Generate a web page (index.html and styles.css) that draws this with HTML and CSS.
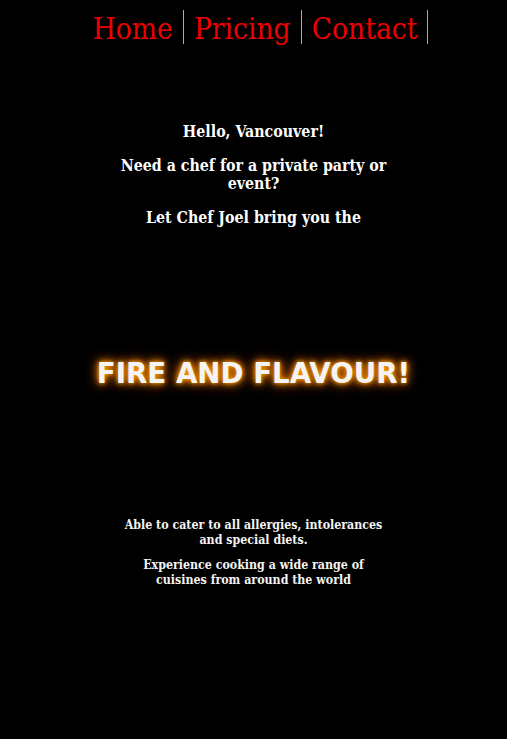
FILE: index.html
```html
<!DOCTYPE html>
<html>
<head>
<meta charset="utf-8">
<link rel="stylesheet" href="styles.css">
</head>
<body>
<nav class="nav">
  <a class="nav-link" href="#">Home</a>
  <a class="nav-link" href="#">Pricing</a>
  <a class="nav-link" href="#">Contact</a>
</nav>
<main class="content">
  <section class="intro">
    <p class="lead">Hello, Vancouver!</p>
    <p class="lead">Need a chef for a private party or event?</p>
    <p class="lead">Let Chef Joel bring you the</p>
  </section>
  <h1 class="fire">FIRE AND FLAVOUR!</h1>
  <section class="details">
    <p class="detail">Able to cater to all allergies, intolerances and special diets.</p>
    <p class="detail">Experience cooking a wide range of cuisines from around the world</p>
  </section>
</main>
</body>
</html>
```
FILE: styles.css
```css
html, body {
  margin: 0;
  background: #000;
}
body {
  font-family: "DejaVu Serif Condensed", "DejaVu Serif", serif;
}
.nav {
  display: flex;
  justify-content: center;
  padding: 10px 0 0 4px;
}
.nav-link {
  color: #ee0000;
  text-decoration: none;
  font-family: "DejaVu Serif Condensed", "DejaVu Serif", serif;
  font-size: 29.6px;
  line-height: 34px;
  padding: 2px 10px 0;
  height: 32px;
  border-right: 1px solid #aaa;
}
.content {
  width: 284px;
  margin: 0 auto;
  text-align: center;
  color: #fff;
}
.intro {
  padding-top: 79px;
}
.lead {
  font-weight: bold;
  font-size: 15.8px;
  line-height: 18px;
  margin: 0 0 16px;
}
.fire {
  margin: 130px -80px 0;
  font-family: "DejaVu Sans", sans-serif;
  font-weight: bold;
  font-size: 27.7px;
  line-height: 34px;
  color: #f4f4f4;
  text-shadow: 0 0 4px #ffa000, 0 0 8px #ff8c00, 0 0 14px #e06000;
}
.details {
  padding: 126px 9px 0;
}
.detail {
  font-weight: bold;
  font-size: 12.3px;
  line-height: 15px;
  margin: 0 0 10px;
  color: #f4f4f4;
}
```
